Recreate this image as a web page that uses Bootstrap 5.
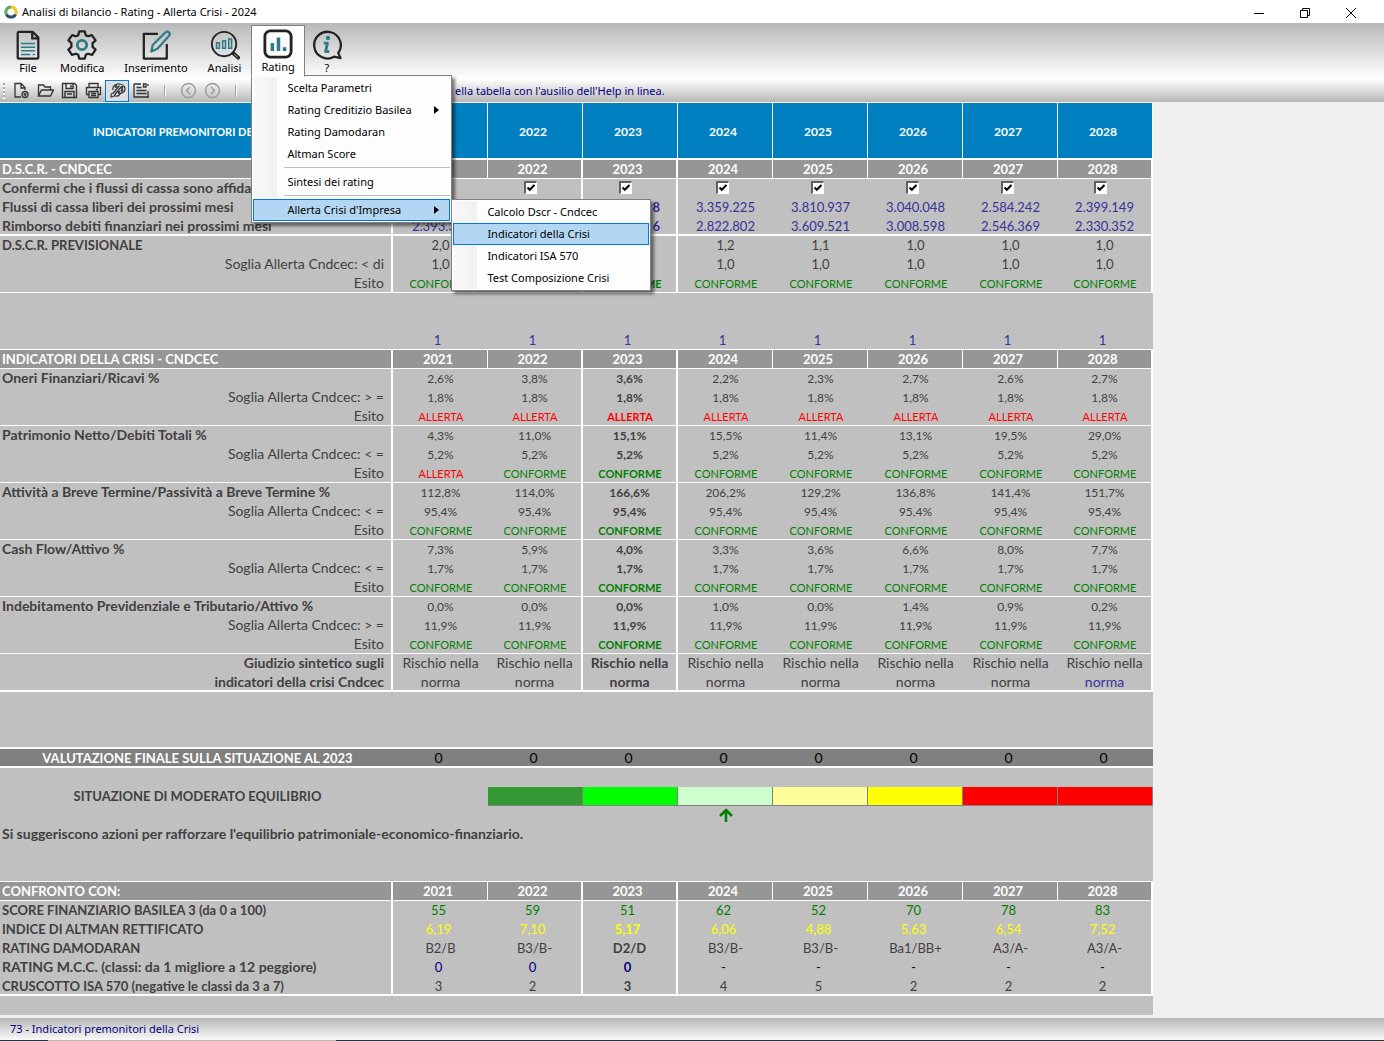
<!DOCTYPE html>
<html lang="it">
<head>
<meta charset="utf-8">
<meta name="viewport" content="width=device-width, initial-scale=1">
<title>Analisi di bilancio - Rating - Allerta Crisi - 2024</title>
<link href="https://cdn.jsdelivr.net/npm/bootstrap@5.3.0/dist/css/bootstrap.min.css" rel="stylesheet">
<style>
  :root { --ink: #404040; --cell: #c0c0c0; --navy: #000080; --hot: #0078d7; --hot-bg: #b3d7f3; }
  body { font-family: "Noto Sans", "Open Sans", sans-serif; font-size: 11px; line-height: 16px; color: #000; background: #f0f0f0; }
  button { background: none; border: 0; color: inherit; }

  /* window frame */
  .win-title { height: 23px; background: #fff; padding-right: 10px; }
  .win-title h1 { font-size: 11px; line-height: 16px; font-weight: 400; }
  .win-ctl { width: 46px; height: 22px; }
  .app-menu { height: 56px; background: linear-gradient(#b8b8b8, #fff); padding-left: 6px; }
  .app-tools { height: 23px; background: linear-gradient(#fff, #b8b8b8); color: var(--navy); padding-left: 3px; }
  .app-status { height: 22px; background: linear-gradient(#b8b8b8, #fafafa); color: var(--navy); padding-left: 10px; }
  .app-edge { height: 1px; background: linear-gradient(90deg, #1f3a44 48px, #b8b8b8 48px 336px, #1f3a44 336px); }

  /* main menu */
  .menu-btn { height: 54px; padding: 3px 9px 0; border: 1px solid transparent; }
  .menu-btn.slim { padding-left: 6px; padding-right: 6px; }
  .menu-btn svg { display: block; width: 30px; height: 30px; margin: 0 auto; }
  .menu-btn span { display: block; line-height: 16px; }
  .menu-btn.opened { background: #fdfdfd; border-color: #808080; border-bottom-color: #fdfdfd; position: relative; z-index: 1060; height: 52px; padding-top: 2px; }
  .app-menu > ul > li { padding-top: 1px; }
  .app-menu > ul > li.is-open { padding-top: 2px; }

  .drop { --bs-dropdown-min-width: 0; --bs-dropdown-font-size: 11px; --bs-dropdown-border-radius: 0;
    background: linear-gradient(90deg, #f8f8f8, #f0f0f0) 2px 1px / 23px calc(100% - 2px) no-repeat #fdfdfd;
    border: 1px solid #808080; box-shadow: 3px 3px 3px rgba(0,0,0,.5); padding: 1px; line-height: 16px; }
  .drop .dropdown-item { height: 22px; padding: 2px 10px 2px 33px; border: 1px solid transparent; color: #000; background: none; display: flex; align-items: center; justify-content: space-between; }
  .drop .dropdown-item.hot { background: var(--hot-bg); border-color: var(--hot); }
  .drop .dropdown-divider { margin: 2px 0 3px 31px; border-color: #bdbdbd; opacity: 1; }
  .drop-main { top: 52px; left: 0; width: 201px; }
  .drop-sub { top: 0; left: 198px; width: 200px; }
  .tri { border: 4px solid transparent; border-left: 5px solid #000; border-right: 0; }

  /* tool buttons */
  .tool-btn { width: 24px; height: 22px; padding: 0; border: 1px solid transparent; }
  .tool-btn svg { width: 17px; height: 17px; display: block; margin: auto; }
  .tool-btn.pressed { border-color: var(--hot); background: #dcdfe2; }
  .tool-sep { width: 1px; height: 12px; background: #a0a0a0; box-shadow: 1px 0 #fff; margin: 0 11px; }
  .grip { width: 2px; height: 16px; background: repeating-linear-gradient(#a8a8a8 0 2px, #fff 2px 4px); margin-right: 4px; }
  .hint { padding-left: 208px; }

  /* spreadsheet */
  .sheet { table-layout: fixed; width: 1153px; border-collapse: separate; border-spacing: 0; background: var(--cell); border-top: 1px solid #fff;
    font-family: Lato, "Open Sans", sans-serif; font-size: 13px; line-height: 16px; color: var(--ink); }
  .sheet col.c-label { width: 393px; }
  .sheet td, .sheet th { height: 19px; padding: 0 0 2px; text-align: center; font-weight: 400; white-space: nowrap; border: 0 solid #fff; overflow: hidden; }
  .sheet th { text-align: left; padding-left: 2px; font-weight: 700; }
  .sheet th.sub { text-align: right; padding-right: 7px; font-weight: 400; }
  .sheet th.sub.strong { font-weight: 700; }
  .sheet th.text, .sheet th.sub, .sheet .verdict > td { font-size: 14px; }
  .sheet .grid > :nth-child(1), .sheet .grid > :nth-child(3), .sheet .grid > :nth-child(4), .sheet .grid > :nth-child(9) { border-right-width: 2px; }
  .sheet .grid > :nth-child(4) { font-weight: 700; }
  .sheet .line > * { border-bottom-width: 1px; padding-bottom: 0; }
  .sheet .rule > * { border-bottom-width: 2px; padding-bottom: 0; }
  .sheet .head > * { background: #969696; color: #fff; font-weight: 700; border-right-width: 1px; }
  .sheet .head > td, .sheet .num > td { padding-right: 4px; }
  .sheet .idx > td { padding-right: 6px; color: #333399; }
  .sheet .title > * { height: 57px; background: #0080c0; color: #fff; font-weight: 700; font-size: 12px; text-align: center; border-right-width: 1px; padding-top: 2px; }
  .sheet .title > th { font-size: 11px; }
  .sheet .title > td { padding-right: 4px; }
  .sheet .blue > td { color: #333399; }
  .sheet .pct > td { font-size: 12px; padding-bottom: 0; }
  .sheet .outcome > td { font-size: 11px; color: green; padding-top: 2px; padding-left: 1px; }
  .sheet .outcome > td.alert-red { color: red; }
  .sheet .good > td { color: green; }
  .sheet .good > :nth-child(4) { font-weight: 400; }
  .sheet .warn > td { color: #ff0; }
  .sheet .dark > td { color: var(--navy); }
  .sheet .final > * { background: gray; color: #000; font-size: 14px; }
  .sheet .final > th { color: #fff; font-size: 13px; text-align: center; }
  .sheet .start { text-align: left; padding-left: 19px; }
  .sheet .end { text-align: right; padding-right: 16px; }
  .sheet .band { border-right: 1px solid gray; border-bottom: 1px solid gray; }
  .sheet th.mid { text-align: center; }
  .sheet input { appearance: none; display: block; width: 13px; height: 13px; margin: 0 44px 0 auto; border: 1px solid #fff; border-top: 2px solid #606060; border-left: 2px solid #606060;
    background: #fff url("data:image/svg+xml,%3Csvg xmlns='http://www.w3.org/2000/svg' viewBox='0 0 10 10'%3E%3Cpath d='M1.5 4.5l2.3 2.3L8.5 2' fill='none' stroke='%23000' stroke-width='2'/%3E%3C/svg%3E") center / 10px no-repeat; }
</style>
<script src="https://cdn.jsdelivr.net/npm/bootstrap@5.3.0/dist/js/bootstrap.bundle.min.js"></script>
</head>
<body class="d-flex flex-column min-vh-100">

<header class="win-title d-flex align-items-center justify-content-between">
  <div class="d-flex align-items-center">
    <svg class="ms-1 me-1" width="14" height="16" viewBox="0 0 14 16" fill="none" stroke-width="3">
      <path d="M7 3a5 5 0 0 0-4.500 7.500" stroke="#5fb05a"/><path d="M7 3a5 5 0 0 1 4.500 7.500" stroke="#f0c52e"/><path d="M2.500 10.500a5.200 5.200 0 0 0 9 0" stroke="#2f4d6b"/>
    </svg>
    <h1 class="m-0">Analisi di bilancio - Rating - Allerta Crisi - 2024</h1>
  </div>
  <div class="d-flex">
    <button class="win-ctl p-0" aria-label="Riduci a icona"><svg width="12" height="12" stroke="#000"><path d="M1 6.500h10"/></svg></button>
    <button class="win-ctl p-0" aria-label="Ripristina"><svg width="12" height="12" stroke="#000" fill="none"><path d="M1.500 3.500h7v7h-7zM3.500 3V1.500h7v7H9"/></svg></button>
    <button class="win-ctl p-0" aria-label="Chiudi"><svg width="12" height="12" stroke="#000"><path d="M1 1l10 10M11 1L1 11"/></svg></button>
  </div>
</header>

<nav class="app-menu">
  <ul class="list-unstyled d-flex m-0">
    <li><button class="menu-btn slim"><svg viewBox="0 0 32 32" fill="none" stroke="#222" stroke-width="2.400"><path d="M6 2h15l6 6v21q0 1.500-1.500 1.500h-19Q5 30.500 5 29V3.500Q5 2 6 2z"/><path d="M20.500 2v7H27" /><path d="M8.500 14.500h15M8.500 18.500h15M8.500 22h15M8.500 26h10M21 26h2.500" stroke="#2f7b87" stroke-width="1.600"/></svg><span>File</span></button></li>
    <li><button class="menu-btn"><svg viewBox="0 0 32 32" fill="none" stroke="#222" stroke-width="2.400" stroke-linejoin="round"><path d="M13 1.500h6l1 4 2.500 1.200L26.500 5.500l4 5.500-3.200 3v4l3.200 3-3.800 5.500-4.200-1.200L20 26.500l-1 4h-6l-1-4-2.500-1.200-4.200 1.200L1.500 21l3.200-3v-4l-3.200-3 4-5.500 4 1.200L12 5.500z"/><circle cx="16" cy="16" r="5" stroke="#2f7b87" stroke-width="3"/></svg><span>Modifica</span></button></li>
    <li><button class="menu-btn"><svg viewBox="0 0 32 32" fill="none" stroke="#222" stroke-width="2.400" stroke-linejoin="round"><path d="M18 4H3v26.500h24.500V15"/><path d="M11 23l1.500-7L26 2.500q2-1.500 3.800 0t0 3.800L17.500 20z" stroke="#2f7b87"/></svg><span>Inserimento</span></button></li>
    <li><button class="menu-btn"><svg viewBox="0 0 32 32" fill="none" stroke="#222" stroke-width="2"><circle cx="15" cy="15" r="13"/><path d="M24 24l2 2"/><path d="M25 25l5 4.500" stroke-width="4" stroke-linecap="round"/><path d="M26 26l3.500 3" stroke="#bbb" stroke-width="1"/><path d="M7 13.500h3v6H7zM13.500 11.500h3v8h-3zM20 9.500h3v10h-3z" stroke="#2f7b87" stroke-width="1.600"/></svg><span>Analisi</span></button></li>
    <li class="position-relative is-open">
      <button class="menu-btn opened" aria-expanded="true"><svg viewBox="0 0 32 32" fill="none" stroke="#222" stroke-width="3"><rect x="2" y="2" width="28" height="28" rx="6"/><path d="M10 15v8.500M16.500 9v14.500M23 19.500v4" stroke="#2f7b87" stroke-width="3.800"/></svg><span>Rating</span></button>
      <ul class="dropdown-menu show drop drop-main">
        <li><a class="dropdown-item" href="#">Scelta Parametri</a></li>
        <li><a class="dropdown-item" href="#">Rating Creditizio Basilea <i class="tri"></i></a></li>
        <li><a class="dropdown-item" href="#">Rating Damodaran</a></li>
        <li><a class="dropdown-item" href="#">Altman Score</a></li>
        <li><hr class="dropdown-divider"></li>
        <li><a class="dropdown-item" href="#">Sintesi dei rating</a></li>
        <li><hr class="dropdown-divider"></li>
        <li class="position-relative"><a class="dropdown-item hot" href="#">Allerta Crisi d'Impresa <i class="tri"></i></a>
          <ul class="dropdown-menu show drop drop-sub">
            <li><a class="dropdown-item" href="#">Calcolo Dscr - Cndcec</a></li>
            <li><a class="dropdown-item hot" href="#">Indicatori della Crisi</a></li>
            <li><a class="dropdown-item" href="#">Indicatori ISA 570</a></li>
            <li><a class="dropdown-item" href="#">Test Composizione Crisi</a></li>
          </ul>
        </li>
      </ul>
    </li>
    <li><button class="menu-btn slim"><svg viewBox="0 0 32 32" fill="none" stroke="#222" stroke-width="2.400" stroke-linejoin="round"><path d="M28 24.500a14.200 14.200 0 1 0-4.500 4l7 1.500z"/><circle cx="17" cy="8.500" r="2.400" fill="#2f7b87" stroke="none"/><path d="M12.500 14h4l-2 9h4" stroke="#2f7b87" stroke-width="3"/></svg><span>?</span></button></li>
  </ul>
</nav>

<div class="app-tools d-flex align-items-center">
  <span class="grip"></span>
  <button class="tool-btn" aria-label="Nuovo"><svg viewBox="0 0 17 17" fill="none" stroke="#333" stroke-width="1.300"><path d="M8 15H2V1.500h6l4 4V8M8 1.500V6h4"/><circle cx="12" cy="12.500" r="3"/><path d="M12 11v3M10.500 12.500h3"/></svg></button>
  <button class="tool-btn" aria-label="Apri"><svg viewBox="0 0 17 17" fill="none" stroke="#333" stroke-width="1.300"><path d="M1.500 14V3h5l1.500 2h5.500v3M1.500 14l3-6h12l-3 6z"/></svg></button>
  <button class="tool-btn" aria-label="Salva"><svg viewBox="0 0 17 17" fill="none" stroke="#333" stroke-width="1.400"><path d="M1.500 1.500h12l2 2v12h-14zM5 2v4.500h7V2M10 3v2.500M4 15V9.500h9V15M6 12h5"/></svg></button>
  <button class="tool-btn" aria-label="Stampa"><svg viewBox="0 0 17 17" fill="none" stroke="#333" stroke-width="1.300"><path d="M4 5V1.500h9V5M4 12.500H1.500v-7h14v7H13M4 9.500h9v6H4zM6 11.500h5M6 13.500h5M11 7.500h2"/></svg></button>
  <button class="tool-btn pressed" aria-label="Colori"><svg viewBox="0 0 17 17" fill="none" stroke="#333" stroke-width="1.200"><path d="M4 8C3 4 7 1.500 11 2s6 4 4.500 7-4 1.500-4.500 3-2.500 2.500-5 2"/><path d="M10.500 3.500L4 11.500M12 5l-6.500 8M4 11q-2 0-2 4 3 0 4-2"/><circle cx="7" cy="4.500" r=".8"/><circle cx="13" cy="5.500" r=".8"/><circle cx="13" cy="8.500" r=".8"/><circle cx="10" cy="10.500" r=".8"/></svg></button>
  <button class="tool-btn" aria-label="Elenco"><svg viewBox="0 0 17 17" fill="none" stroke="#333" stroke-width="1.300"><path d="M1 2h7M15 2v2M1 2v13h15M15 9v6M3.500 5.500h5M3.500 8.500h10M3.500 11.500h10M10.500 2h2.500v3h-2.500z"/></svg></button>
  <span class="tool-sep"></span>
  <button class="tool-btn" aria-label="Indietro"><svg viewBox="0 0 17 17" fill="none" stroke="#999" stroke-width="1.400"><circle cx="8.500" cy="8.500" r="7"/><path d="M10 5L6.500 8.500 10 12"/></svg></button>
  <button class="tool-btn" aria-label="Avanti"><svg viewBox="0 0 17 17" fill="none" stroke="#999" stroke-width="1.400"><circle cx="8.500" cy="8.500" r="7"/><path d="M7 5l3.500 3.500L7 12"/></svg></button>
  <span class="tool-sep"></span>
  <span class="hint">ella tabella con l'ausilio dell'Help in linea.</span>
</div>

<main class="flex-grow-1">
  <table class="sheet">
    <colgroup><col class="c-label"><col span="8"></colgroup>
    <tbody id="rows"></tbody>
  </table>
</main>

<footer>
  <div class="app-status d-flex align-items-center">73 - Indicatori premonitori della Crisi</div>
  <div class="app-edge"></div>
</footer>

<script>
  // Each row: [row classes, label, label class, eight values]; one value alone is repeated on every year.
  const years = ['2021','2022','2023','2024','2025','2026','2027','2028'];
  const C = 'CONFORME', A = 'ALLERTA';
  const blank = n => Array.from({length: n}, () => ['', '', '', '']);
  const block = (label, sign, vals, limit, out) => [
    ['grid pct', label, 'text', vals],
    ['grid pct', 'Soglia Allerta Cndcec: ' + sign + ' =', 'sub', limit],
    ['grid outcome line', 'Esito', 'sub', out]
  ];
  const rows = [
    ['title rule', 'INDICATORI PREMONITORI DELLA CRISI', '', years],
    ['grid head line', 'D.S.C.R. - CNDCEC', '', years],
    ['grid', 'Confermi che i flussi di cassa sono affidabili', 'text', 'check'],
    ['grid blue', 'Flussi di cassa liberi dei prossimi mesi', 'text', ['','','8','3.359.225','3.810.937','3.040.048','2.584.242','2.399.149']],
    ['grid blue rule', 'Rimborso debiti finanziari nei prossimi mesi', 'text', ['2.393.3','','6','2.822.802','3.609.521','3.008.598','2.546.369','2.330.352']],
    ['grid', 'D.S.C.R. PREVISIONALE', '', ['2,0','','','1,2','1,1','1,0','1,0','1,0']],
    ['grid', 'Soglia Allerta Cndcec: < di', 'sub', ['1,0','','','1,0','1,0','1,0','1,0','1,0']],
    ['grid outcome line', 'Esito', 'sub', [C,'',C,C,C,C,C,C]],
    ...blank(2),
    ['idx line', '', '', '1'],
    ['grid head line', 'INDICATORI DELLA CRISI - CNDCEC', '', years],
    ...block('Oneri Finanziari/Ricavi %', '>', ['2,6%','3,8%','3,6%','2,2%','2,3%','2,7%','2,6%','2,7%'], '1,8%', A),
    ...block('Patrimonio Netto/Debiti Totali %', '<', ['4,3%','11,0%','15,1%','15,5%','11,4%','13,1%','19,5%','29,0%'], '5,2%', [A,C,C,C,C,C,C,C]),
    ...block('Attività a Breve Termine/Passività a Breve Termine %', '<', ['112,8%','114,0%','166,6%','206,2%','129,2%','136,8%','141,4%','151,7%'], '95,4%', C),
    ...block('Cash Flow/Attivo %', '<', ['7,3%','5,9%','4,0%','3,3%','3,6%','6,6%','8,0%','7,7%'], '1,7%', C),
    ...block('Indebitamento Previdenziale e Tributario/Attivo %', '>', ['0,0%','0,0%','0,0%','1,0%','0,0%','1,4%','0,9%','0,2%'], '11,9%', C),
    ['grid verdict', 'Giudizio sintetico sugli', 'sub strong', 'Rischio nella'],
    ['grid verdict rule lastblue', 'indicatori della crisi Cndcec', 'sub strong', 'norma'],
    ...blank(2),
    ['rule', '', '', ''],
    ['final num rule', 'VALUTAZIONE FINALE SULLA SITUAZIONE AL 2023', '', '0'],
    ...blank(1),
    ['bands', 'SITUAZIONE DI MODERATO EQUILIBRIO', 'mid', 'band'],
    ['', '', '', ['','','','arrow','','','','']],
    ['note', "Si suggeriscono azioni per rafforzare l'equilibrio patrimoniale-economico-finanziario.", 'text', 'span'],
    ...blank(1),
    ['line', '', '', ''],
    ['grid head line', 'CONFRONTO CON:', '', years],
    ['grid num good', 'SCORE FINANZIARIO BASILEA 3 (da 0 a 100)', '', ['55','59','51','62','52','70','78','83']],
    ['grid num warn', 'INDICE DI ALTMAN RETTIFICATO', '', ['6,19','7,10','5,17','6,06','4,88','5,63','6,54','7,52']],
    ['grid', 'RATING DAMODARAN', '', ['B2/B','B3/B-','D2/D','B3/B-','B3/B-','Ba1/BB+','A3/A-','A3/A-']],
    ['grid num dark', 'RATING M.C.C. (classi: da 1 migliore a 12 peggiore)', 'text', ['0','0','0','-','-','-','-','-']],
    ['grid num rule', 'CRUSCOTTO ISA 570 (negative le classi da 3 a 7)', '', ['3','2','3','4','5','2','2','2']],
    ...blank(1)
  ];
  const bands = ['', '#339933', '#00ff00', '#ccffcc', '#ffff99', '#ffff00', '#ff0000', '#ff0000'];
  const arrow = '<svg class="d-block mx-auto" width="14" height="14" viewBox="0 0 14 14" fill="none" stroke="green" stroke-width="2.500"><path d="M7 14V2M1 8l6-6 6 6"/></svg>';
  const body = document.getElementById('rows');
  for (const [cls, label, lcls, vals] of rows) {
    const tr = body.insertRow();
    tr.className = cls;
    const th = document.createElement('th');
    th.className = lcls;
    th.textContent = label;
    tr.append(th);
    if (vals === 'span') { th.colSpan = 9; continue; }
    years.forEach((year, i) => {
      const td = tr.insertCell();
      const v = Array.isArray(vals) ? vals[i] : vals;
      if (v === 'check') td.innerHTML = `<input type="checkbox" checked aria-label="Flussi affidabili ${year}">`;
      else if (v === 'arrow') td.innerHTML = arrow;
      else if (v === 'band') { if (bands[i]) { td.className = 'band'; td.style.backgroundColor = bands[i]; } }
      else td.textContent = v;
      if (v === A) td.className = 'alert-red';
      if (v === '2.393.3') td.className = 'start';
      if (v === '8' || v === '6') td.className = 'end';
      if (cls.includes('lastblue') && i === 7) td.style.color = '#333399';
    });
  }
</script>
</body>
</html>
